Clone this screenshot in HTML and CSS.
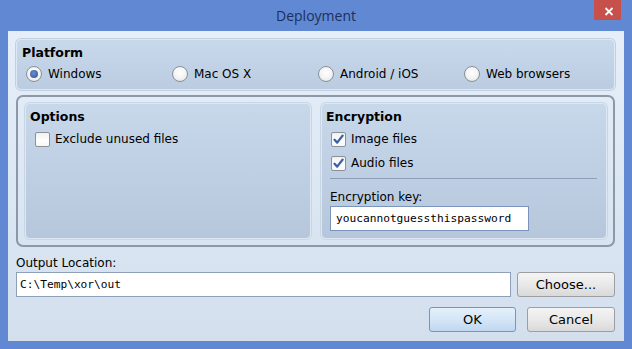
FILE: index.html
```html
<!DOCTYPE html>
<html>
<head>
<meta charset="utf-8">
<link rel="stylesheet" href="styles.css">
</head>
<body>
<div class="window">
  <div class="titlebar">
    <span class="title">Deployment</span>
    <span class="close"><svg width="10" height="9" viewBox="0 0 10 9"><path d="M1.5 1 L8.5 8 M8.5 1 L1.5 8" stroke="#fff" stroke-width="1.8" fill="none"/></svg></span>
  </div>
  <div class="client">
    <section class="panel platform">
      <div class="panel-title">Platform</div>
      <div class="radios">
        <label class="radio"><span class="radio-box checked"></span>Windows</label>
        <label class="radio"><span class="radio-box"></span>Mac OS X</label>
        <label class="radio"><span class="radio-box"></span>Android / iOS</label>
        <label class="radio"><span class="radio-box"></span>Web browsers</label>
      </div>
    </section>
    <div class="group">
      <section class="panel sub">
        <div class="panel-title">Options</div>
        <div class="checks">
          <label class="check"><span class="check-box"></span>Exclude unused files</label>
        </div>
      </section>
      <section class="panel sub">
        <div class="panel-title">Encryption</div>
        <div class="checks">
          <label class="check"><span class="check-box"><svg width="13" height="13" viewBox="0 0 13 13"><path d="M2.5 6.8 L5.2 9.6 L10.6 2.6" stroke="#3c5fa4" stroke-width="2.3" fill="none" stroke-linecap="round" stroke-linejoin="round"/></svg></span>Image files</label>
          <label class="check"><span class="check-box"><svg width="13" height="13" viewBox="0 0 13 13"><path d="M2.5 6.8 L5.2 9.6 L10.6 2.6" stroke="#3c5fa4" stroke-width="2.3" fill="none" stroke-linecap="round" stroke-linejoin="round"/></svg></span>Audio files</label>
        </div>
        <div class="key-section">
          <div class="sep"></div>
          <div class="field-label key-label">Encryption key:</div>
          <div class="textbox key">youcannotguessthispassword</div>
        </div>
      </section>
    </div>
    <div class="field-label out-label">Output Location:</div>
    <div class="output-row">
      <div class="textbox output">C:\Temp\xor\out</div>
      <button class="btn choose">Choose...</button>
    </div>
    <div class="actions">
      <button class="btn default ok">OK</button>
      <button class="btn cancel">Cancel</button>
    </div>
  </div>
</div>
</body>
</html>
```

FILE: styles.css
```css
* { box-sizing: border-box; }
html, body { margin: 0; padding: 0; }
body {
  width: 632px;
  height: 349px;
  overflow: hidden;
  font-family: "DejaVu Sans", Verdana, sans-serif;
  font-size: 12px;
  color: #000;
}
.window {
  width: 632px;
  height: 349px;
  background: #6189d3;
  display: flex;
  flex-direction: column;
}
.titlebar {
  height: 31px;
  display: grid;
  grid-template-columns: 1fr auto 1fr;
}
.title {
  grid-column: 2;
  font-family: "Open Sans", "Noto Sans", sans-serif;
  font-size: 14px;
  line-height: 31px;
  color: #1b2f5c;
}
.close {
  grid-column: 3;
  justify-self: end;
  align-self: start;
  margin-right: 11px;
  width: 27px;
  height: 20px;
  background: #c7504b;
  display: flex;
  align-items: center;
  justify-content: center;
  padding-left: 2px;
  padding-top: 2px;
}
.close svg { display: block; }
.client {
  margin: 0 8px;
  height: 310px;
  background: linear-gradient(180deg, #e6eff9 0%, #dce7f4 50%, #d3dfed 100%);
  padding: 8px 9px 9px 8px;
  display: flex;
  flex-direction: column;
}
.panel {
  border: 1px solid #dde8f4;
  border-radius: 5px;
  background: linear-gradient(180deg, #c8d8eb 0%, #b6c7dc 100%);
  padding: 5px 4px 7px 4px;
}
.platform {
  height: 51px;
  background: linear-gradient(180deg, #c9d9ec 0%, #bbcce1 100%);
  padding: 5px 5px 7px 5px;
  box-shadow: 0 0 0 1px #c2cfde;
}
.panel-title {
  font-weight: bold;
  font-size: 12.5px;
  line-height: 15px;
  height: 15px;
}
.radios {
  margin-top: 6px;
  margin-left: 4px;
  display: grid;
  grid-template-columns: repeat(4, 146px);
}
.radio {
  display: flex;
  align-items: center;
  gap: 6px;
  height: 16px;
  line-height: 16px;
  white-space: nowrap;
}
.radio-box {
  width: 16px;
  height: 16px;
  border-radius: 50%;
  border: 1px solid #8b9096;
  background: radial-gradient(circle at 50% 40%, #ffffff 0%, #f4f4f4 50%, #d9dcdf 100%);
  display: flex;
  align-items: center;
  justify-content: center;
  flex: none;
}
.radio-box.checked::after {
  content: "";
  width: 8px;
  height: 8px;
  border-radius: 50%;
  background: radial-gradient(circle at 45% 40%, #6d8fd0 0%, #3f60a9 70%, #344f92 100%);
}
.group {
  margin-top: 5px;
  height: 152px;
  border: 2px solid #8c97a7;
  border-radius: 7px;
  padding: 6px 6px 6px 7px;
  display: flex;
  gap: 10px;
}
.sub {
  flex: 1;
  box-shadow: 0 0 0 1px #c9d5e3;
}
.checks {
  margin-top: 7px;
  padding-left: 5px;
  display: flex;
  flex-direction: column;
  gap: 8px;
}
.check {
  display: flex;
  align-items: center;
  gap: 5px;
  height: 16px;
  line-height: 16px;
  white-space: nowrap;
}
.check-box {
  width: 15px;
  height: 15px;
  border: 1px solid #8d9096;
  border-radius: 2px;
  background: linear-gradient(180deg, #f0f0f0 0%, #ffffff 60%, #f6f6f6 100%);
  display: flex;
  align-items: center;
  justify-content: center;
  flex: none;
}
.check-box svg { display: block; }
.key-section {
  padding-left: 4px;
  padding-right: 5px;
}
.sep {
  margin-top: 7px;
  height: 1px;
  background: #8e9eb4;
}
.field-label {
  line-height: 14px;
  height: 14px;
  white-space: nowrap;
}
.key-label { margin-top: 11px; }
.textbox {
  background: #fff;
  border: 1px solid #7a94bb;
  font-family: "DejaVu Sans Mono", "Liberation Mono", monospace;
  font-size: 11.2px;
  height: 25px;
  line-height: 23px;
  white-space: nowrap;
}
.key {
  margin-top: 2px;
  width: 199px;
  padding-left: 5px;
}
.out-label {
  margin-top: 9px;
}
.output-row {
  margin-top: 2px;
  display: flex;
  gap: 6px;
}
.output {
  width: 495px;
  padding-left: 3px;
  border-color: #8ea0b8;
}
.btn {
  font-family: "DejaVu Sans", Verdana, sans-serif;
  font-size: 13px;
  color: #000;
  height: 25px;
  padding: 0;
  border: 1px solid #9c9ea2;
  border-radius: 3px;
  background: linear-gradient(180deg, #f4f4f4 0%, #e9e9e9 50%, #d9d9d9 100%);
}
.choose { width: 98px; }
.actions {
  margin-top: 10px;
  display: flex;
  justify-content: flex-end;
  gap: 11px;
}
.ok {
  width: 87px;
  border-color: #6f97c9;
  background: linear-gradient(180deg, #e5f0fb 0%, #d4e6f7 50%, #bfd7ef 100%);
}
.cancel { width: 88px; }
```
